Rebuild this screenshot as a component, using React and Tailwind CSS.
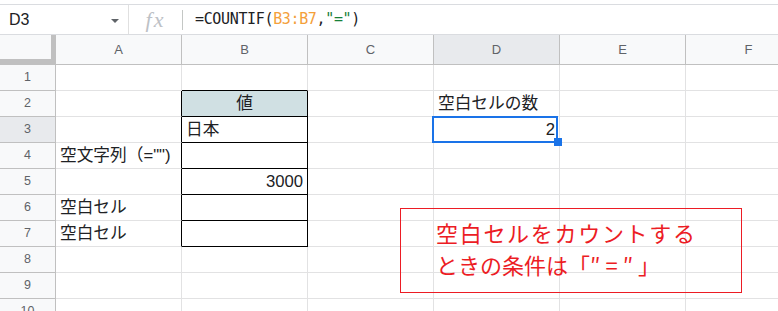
import React from "react";

const COLS = ["A", "B", "C", "D", "E", "F"];
const ROWS = [1, 2, 3, 4, 5, 6, 7, 8, 9, 10];

const DATA = {
  2: { B: { t: "値", a: "c", bg: true }, D: { t: "空白セルの数", a: "l" } },
  3: { B: { t: "日本", a: "l" }, D: { t: "2", a: "r" } },
  4: { A: { t: "空文字列（=\"\")", a: "l" } },
  5: { B: { t: "3000", a: "r" } },
  6: { A: { t: "空白セル", a: "l" } },
  7: { A: { t: "空白セル", a: "l" } },
};

function cellClass(r, c) {
  const inTable = r >= 2 && r <= 7;
  const rightBlack = (c === "A" || c === "B") && inTable;
  const bottomBlack = c === "B" && r >= 1 && r <= 7;
  const parts = ["h-[26px] border-r border-b flex items-center text-[16.7px] overflow-hidden whitespace-nowrap"];
  parts.push(rightBlack ? "border-r-black" : "border-r-[#e2e2e3]");
  parts.push(bottomBlack ? "border-b-black" : "border-b-[#e2e2e3]");
  const d = DATA[r] && DATA[r][c];
  if (d) {
    if (d.a === "c") parts.push("justify-center");
    else if (d.a === "r") parts.push("justify-end pr-[4px]");
    else parts.push("justify-start pl-[4px]");
    if (d.bg) parts.push("bg-[#d0e0e3]");
  }
  return parts.join(" ");
}

export default function App() {
  return (
    <div className="relative w-[778px] h-[311px] overflow-hidden bg-white text-[#202124] font-['Liberation_Sans','Noto_Sans_CJK_JP',sans-serif]">
      <div className="h-[4px]" />
      {/* formula bar */}
      <div className="flex h-[31px] border-y border-[#dadce0]">
        <div className="w-[129px] shrink-0 border-r border-[#e0e0e0] flex items-center pl-[9px] pr-[9px]">
          <span className="flex-1 text-[16px] leading-none">D3</span>
          <svg width="8" height="4" viewBox="0 0 8 4" className="mt-[3px]">
            <polygon points="0,0 8,0 4,4" fill="#5f6368" />
          </svg>
        </div>
        <div className="w-[53px] shrink-0 flex items-center justify-center">
          <span className="font-['Liberation_Serif',serif] italic text-[22px] tracking-[2px] text-[#bdc1c6] leading-none">fx</span>
        </div>
        <div className="flex items-center">
          <div className="w-[1px] h-[20px] bg-[#c4c7c5]" />
        </div>
        <div className="flex items-center pl-[12px] font-['DejaVu_Sans_Mono',monospace] text-[15px] tracking-[-0.35px] text-[#202124]">
          <span>=COUNTIF(</span>
          <span className="text-[#f4a03a]">B3:B7</span>
          <span>,</span>
          <span className="text-[#188038]">"="</span>
          <span>)</span>
        </div>
      </div>

      {/* grid */}
      <div className="grid grid-cols-[56px_repeat(6,126px)] w-[812px]">
        <div className="h-[30px] bg-[#f8f9fa] border-r-[5px] border-b-[6px] border-[#c0c0c0]" />
        {COLS.map((c) => (
          <div
            key={c}
            className={
              c === "D"
                ? "h-[30px] bg-[#e8eaed] border-r border-b border-[#c0c0c0] flex items-center justify-center text-[13px] text-[#5f6368]"
                : "h-[30px] bg-[#f8f9fa] border-r border-b border-[#c0c0c0] flex items-center justify-center text-[13px] text-[#5f6368]"
            }
          >
            {c}
          </div>
        ))}
        {ROWS.map((r) => (
          <React.Fragment key={r}>
            <div
              className={
                r === 3
                  ? "h-[26px] bg-[#e8eaed] border-r border-b border-[#c0c0c0] flex items-center justify-center text-[12.5px] text-[#5f6368]"
                  : "h-[26px] bg-[#f8f9fa] border-r border-b border-[#c0c0c0] flex items-center justify-center text-[12.5px] text-[#5f6368]"
              }
            >
              {r}
            </div>
            {COLS.map((c) => {
              const d = DATA[r] && DATA[r][c];
              return (
                <div key={c} className={cellClass(r, c)}>
                  {d ? d.t : null}
                </div>
              );
            })}
          </React.Fragment>
        ))}
      </div>

      {/* selection D3 */}
      <div className="absolute left-[432px] top-[116px] w-[126px] h-[27px] border-2 border-[#1a73e8]" />
      <div className="absolute left-[554px] top-[138px] w-[8px] h-[8px] bg-[#1a73e8]" />

      {/* callout */}
      <div className="absolute left-[400px] top-[208px] w-[342px] h-[85px] border border-[#ec1c24] flex items-center pl-[35px] pb-[6px]">
        <div className="text-[#ec1c24] text-[22px] leading-[32px] font-['Noto_Sans_CJK_JP',sans-serif] whitespace-nowrap">
          <div className="tracking-[1.7px]">空白セルをカウントする</div>
          <div>
            ときの条件は「<span className="tracking-[5px]">″=″</span>」
          </div>
        </div>
      </div>
    </div>
  );
}
